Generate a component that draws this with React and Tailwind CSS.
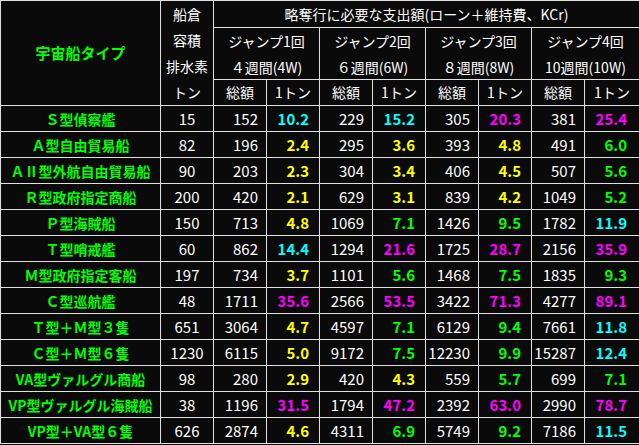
import React from "react";

const C = "text-[#00ffff]";
const M = "text-[#ff00ff]";
const Y = "text-[#ffff00]";
const G = "text-[#00ff00]";
const colorOf = { c: C, m: M, y: Y, g: G };

const rows = [
  ["Ｓ型偵察艦", "15", ["152", "10.2", "c"], ["229", "15.2", "c"], ["305", "20.3", "m"], ["381", "25.4", "m"]],
  ["Ａ型自由貿易船", "82", ["196", "2.4", "y"], ["295", "3.6", "y"], ["393", "4.8", "y"], ["491", "6.0", "g"]],
  ["ＡⅡ型外航自由貿易船", "90", ["203", "2.3", "y"], ["304", "3.4", "y"], ["406", "4.5", "y"], ["507", "5.6", "g"]],
  ["Ｒ型政府指定商船", "200", ["420", "2.1", "y"], ["629", "3.1", "y"], ["839", "4.2", "y"], ["1049", "5.2", "g"]],
  ["Ｐ型海賊船", "150", ["713", "4.8", "y"], ["1069", "7.1", "g"], ["1426", "9.5", "g"], ["1782", "11.9", "c"]],
  ["Ｔ型哨戒艦", "60", ["862", "14.4", "c"], ["1294", "21.6", "m"], ["1725", "28.7", "m"], ["2156", "35.9", "m"]],
  ["Ｍ型政府指定客船", "197", ["734", "3.7", "y"], ["1101", "5.6", "g"], ["1468", "7.5", "g"], ["1835", "9.3", "g"]],
  ["Ｃ型巡航艦", "48", ["1711", "35.6", "m"], ["2566", "53.5", "m"], ["3422", "71.3", "m"], ["4277", "89.1", "m"]],
  ["Ｔ型＋Ｍ型３隻", "651", ["3064", "4.7", "y"], ["4597", "7.1", "g"], ["6129", "9.4", "g"], ["7661", "11.8", "c"]],
  ["Ｃ型＋Ｍ型６隻", "1230", ["6115", "5.0", "y"], ["9172", "7.5", "g"], ["12230", "9.9", "g"], ["15287", "12.4", "c"]],
  ["VA型ヴァルグル商船", "98", ["280", "2.9", "y"], ["420", "4.3", "y"], ["559", "5.7", "g"], ["699", "7.1", "g"]],
  ["VP型ヴァルグル海賊船", "38", ["1196", "31.5", "m"], ["1794", "47.2", "m"], ["2392", "63.0", "m"], ["2990", "78.7", "m"]],
  ["VP型＋VA型６隻", "626", ["2874", "4.6", "y"], ["4311", "6.9", "g"], ["5749", "9.2", "g"], ["7186", "11.5", "c"]],
];

const cell = "bg-[#0a0a0a] flex items-center";

export default function App() {
  return (
    <div className="w-[639px] h-[445px] overflow-hidden bg-[#0a0a0a] font-['Noto_Sans_CJK_JP',sans-serif]">
      <div className="grid grid-cols-[159px_52px_52px_52px_52px_52px_52px_52px_52px_54px] grid-rows-[26px_repeat(16,25px)] gap-px bg-[#e0e0e0] pt-px pl-px pb-px w-[639px]">
        {/* header */}
        <div className={`${cell} row-span-4 justify-center text-[15px] font-bold ${G}`}>宇宙船タイプ</div>
        <div className={`${cell} row-span-4 flex-col justify-center text-white text-[14px] leading-[26px] text-center`}>
          <span>船倉</span>
          <span>容積</span>
          <span>排水素</span>
          <span>トン</span>
        </div>
        <div className={`${cell} col-span-8 justify-center text-white text-[14px] pt-px`}>
          略奪行に必要な支出額(ローン＋維持費、KCr)
        </div>
        {[
          ["ジャンプ1回", "４週間(4W)"],
          ["ジャンプ2回", "６週間(6W)"],
          ["ジャンプ3回", "８週間(8W)"],
          ["ジャンプ4回", "10週間(10W)"],
        ].map(([a, b]) => (
          <div key={a} className={`${cell} col-span-2 row-span-2 flex-col justify-center text-white text-[14px] leading-[26px]`}>
            <span>{a}</span>
            <span>{b}</span>
          </div>
        ))}
        {[0, 1, 2, 3].map((i) => (
          <React.Fragment key={i}>
            <div className={`${cell} justify-center text-white text-[14px]`}>総額</div>
            <div className={`${cell} justify-center text-white text-[14px]`}>1トン</div>
          </React.Fragment>
        ))}
        {/* data */}
        {rows.map((r) => (
          <React.Fragment key={r[0]}>
            <div className={`${cell} justify-center text-[14px] font-bold ${G} pt-px`}>{r[0]}</div>
            <div className={`${cell} justify-center text-white text-[15px] pt-[2px]`}>{r[1]}</div>
            {r.slice(2).map(([tot, per, col], j) => (
              <React.Fragment key={j}>
                <div className={`${cell} justify-end pr-[8px] text-white text-[15px] pt-[2px]`}>{tot}</div>
                <div
                  className={`${cell} justify-end ${j === 3 ? "pr-[12px]" : "pr-[10px]"} text-[15px] font-bold pt-[2px] ${colorOf[col]}`}
                >
                  {per}
                </div>
              </React.Fragment>
            ))}
          </React.Fragment>
        ))}
      </div>
    </div>
  );
}
